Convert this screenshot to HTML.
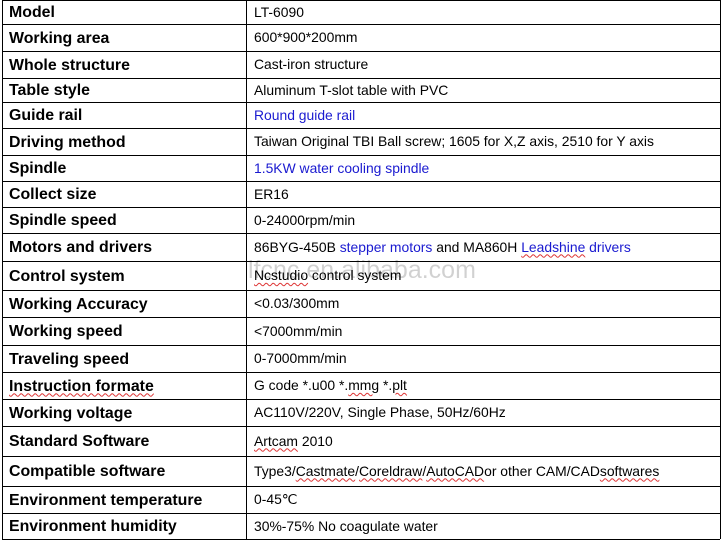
<!DOCTYPE html>
<html><head><meta charset="utf-8"><style>
body{margin:0;width:722px;height:540px;background:#fff;position:relative;overflow:hidden;font-family:"Liberation Sans",Arial,sans-serif}
.r{position:absolute;left:2px;width:718px;border-top:1px solid #000}
.l,.v{position:absolute;top:0;bottom:0;display:flex;align-items:center;white-space:nowrap}
.l{left:7px;font-weight:bold;font-size:15.9px}
.v{left:252px;font-size:13.9px;padding-bottom:3px;box-sizing:border-box}
.b{color:#1a1ad0}
.u{text-decoration:underline wavy #d33;text-decoration-thickness:1px;text-underline-offset:2px}
#vl{position:absolute;left:246px;top:0;height:539px;border-left:1px solid #000}
#ll{position:absolute;left:2px;top:0;height:539px;border-left:1px solid #000}
#rl{position:absolute;left:720px;top:0;height:539px;border-left:1px solid #000}
#bl{position:absolute;left:2px;width:718px;top:539px;border-top:1px solid #000}
#wm{position:absolute;left:248px;top:256px;font-size:25px;color:rgba(0,0,0,0.18)}
</style></head><body>
<div id="ll"></div><div id="vl"></div><div id="rl"></div><div id="bl"></div>
<div class="r" style="top:0;height:24px"><div class="l">Model</div><div class="v">LT-6090</div></div>
<div class="r" style="top:24px;height:27px"><div class="l">Working area</div><div class="v">600*900*200mm</div></div>
<div class="r" style="top:51px;height:27px"><div class="l">Whole structure</div><div class="v">Cast-iron structure</div></div>
<div class="r" style="top:78px;height:24px"><div class="l">Table style</div><div class="v">Aluminum T-slot table with PVC</div></div>
<div class="r" style="top:102px;height:26px"><div class="l">Guide rail</div><div class="v b">Round guide rail</div></div>
<div class="r" style="top:128px;height:27px"><div class="l">Driving method</div><div class="v">Taiwan Original TBI Ball screw; 1605 for X,Z axis, 2510 for Y axis</div></div>
<div class="r" style="top:155px;height:26px"><div class="l">Spindle</div><div class="v b">1.5KW water cooling spindle</div></div>
<div class="r" style="top:181px;height:26px"><div class="l">Collect size</div><div class="v">ER16</div></div>
<div class="r" style="top:207px;height:26px"><div class="l">Spindle speed</div><div class="v">0-24000rpm/min</div></div>
<div class="r" style="top:233px;height:28px"><div class="l">Motors and drivers</div><div class="v">86BYG-450B&nbsp;<span class="b">stepper motors</span>&nbsp;and MA860H&nbsp;<span class="b"><span class="u">Leadshine</span> drivers</span></div></div>
<div class="r" style="top:261px;height:29px"><div class="l">Control system</div><div class="v"><span class="u">Ncstudio</span>&nbsp;control system</div></div>
<div class="r" style="top:290px;height:27px"><div class="l">Working Accuracy</div><div class="v">&lt;0.03/300mm</div></div>
<div class="r" style="top:317px;height:28px"><div class="l">Working speed</div><div class="v">&lt;7000mm/min</div></div>
<div class="r" style="top:345px;height:27px"><div class="l">Traveling speed</div><div class="v">0-7000mm/min</div></div>
<div class="r" style="top:372px;height:27px"><div class="l"><span class="u">Instruction formate</span></div><div class="v">G code *.u00 *.<span class="u">mmg</span>&nbsp;*.<span class="u">plt</span></div></div>
<div class="r" style="top:399px;height:27px"><div class="l">Working voltage</div><div class="v">AC110V/220V, Single Phase, 50Hz/60Hz</div></div>
<div class="r" style="top:426px;height:30px"><div class="l">Standard Software</div><div class="v"><span class="u">Artcam</span>&nbsp;2010</div></div>
<div class="r" style="top:456px;height:30px"><div class="l">Compatible software</div><div class="v">Type3/<span class="u">Castmate</span>/<span class="u">Coreldraw</span>/<span class="u">AutoCAD</span>or other CAM/CAD <span class="u">softwares</span></div></div>
<div class="r" style="top:486px;height:27px"><div class="l">Environment temperature</div><div class="v">0-45℃</div></div>
<div class="r" style="top:513px;height:26px"><div class="l">Environment humidity</div><div class="v">30%-75% No coagulate water</div></div>
<div id="wm">lfcnc.en.alibaba.com</div>
</body></html>
